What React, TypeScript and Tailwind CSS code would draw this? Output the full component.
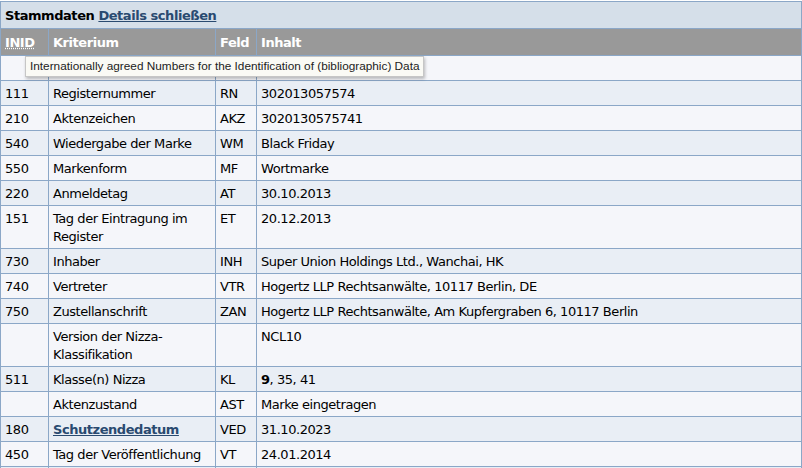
import React from 'react'

// Register master data table with an INID tooltip open over the first row.

type Row = {
  inid: string
  label: React.ReactNode
  field: string
  value: React.ReactNode
}

const rows: Row[] = [
  { inid: '', label: '', field: '', value: '\u00a0' },
  { inid: '111', label: 'Registernummer', field: 'RN', value: '302013057574' },
  { inid: '210', label: 'Aktenzeichen', field: 'AKZ', value: '3020130575741' },
  { inid: '540', label: 'Wiedergabe der Marke', field: 'WM', value: 'Black Friday' },
  { inid: '550', label: 'Markenform', field: 'MF', value: 'Wortmarke' },
  { inid: '220', label: 'Anmeldetag', field: 'AT', value: '30.10.2013' },
  { inid: '151', label: 'Tag der Eintragung im Register', field: 'ET', value: '20.12.2013' },
  { inid: '730', label: 'Inhaber', field: 'INH', value: 'Super Union Holdings Ltd., Wanchai, HK' },
  { inid: '740', label: 'Vertreter', field: 'VTR', value: 'Hogertz LLP Rechtsanwälte, 10117 Berlin, DE' },
  {
    inid: '750',
    label: 'Zustellanschrift',
    field: 'ZAN',
    value: 'Hogertz LLP Rechtsanwälte, Am Kupfergraben 6, 10117 Berlin',
  },
  { inid: '', label: 'Version der Nizza-Klassifikation', field: '', value: 'NCL10' },
  {
    inid: '511',
    label: 'Klasse(n) Nizza',
    field: 'KL',
    value: (
      <>
        <b>9</b>, 35, 41
      </>
    ),
  },
  { inid: '', label: 'Aktenzustand', field: 'AST', value: 'Marke eingetragen' },
  {
    inid: '180',
    label: (
      <a href="#" className="font-bold text-[#294a70] underline">
        Schutzendedatum
      </a>
    ),
    field: 'VED',
    value: '31.10.2023',
  },
  { inid: '450', label: 'Tag der Veröffentlichung', field: 'VT', value: '24.01.2014' },
  { inid: '', label: '', field: '', value: '\u00a0' },
]

const td = 'border border-[#8ba7c7] px-[4px] pt-[4px] pb-[2px] align-top leading-[18px]'
const th = 'border border-[#8ba7c7] px-[4px] pt-[5px] pb-[3px] text-left align-top leading-[18px] font-bold'

export default function App() {
  return (
    <div className="relative h-[468px] w-[802px] overflow-hidden bg-white pt-px font-['DejaVu_Sans',Verdana,sans-serif] text-[13px] tracking-[-0.45px] text-black">
      <table className="w-[802px] table-fixed border-collapse">
        <colgroup>
          <col className="w-[48px]" />
          <col className="w-[167px]" />
          <col className="w-[41px]" />
          <col />
        </colgroup>
        <thead>
          <tr className="bg-[#d5dfe9]">
            <th colSpan={4} className={th}>
              Stammdaten{' '}
              <a href="#" className="text-[#294a70] underline">
                Details schließen
              </a>
            </th>
          </tr>
          <tr className="bg-[#999999] text-white">
            <th className={th}>
              <abbr className="underline decoration-dotted">INID</abbr>
            </th>
            <th className={th}>Kriterium</th>
            <th className={th}>Feld</th>
            <th className={th}>Inhalt</th>
          </tr>
        </thead>
        <tbody>
          {rows.map((r, i) => (
            <tr key={i} className={i % 2 === 0 ? 'bg-[#f5f6fa]' : 'bg-[#e9eef5]'}>
              <td className={td}>{r.inid}</td>
              <td className={td}>{r.label}</td>
              <td className={td}>{r.field}</td>
              <td className={td}>{r.value}</td>
            </tr>
          ))}
        </tbody>
      </table>

      <div className="absolute left-[25px] top-[56px] h-[21px] w-[399px] whitespace-nowrap border border-[#c6c6c6] bg-[#fafaf5] px-[4px] font-['Liberation_Sans',Arial,sans-serif] text-[11.8px] leading-[19px] tracking-normal text-[#222] shadow-[1px_2px_3px_rgba(0,0,0,0.25)]">
        Internationally agreed Numbers for the Identification of (bibliographic) Data
      </div>
    </div>
  )
}
